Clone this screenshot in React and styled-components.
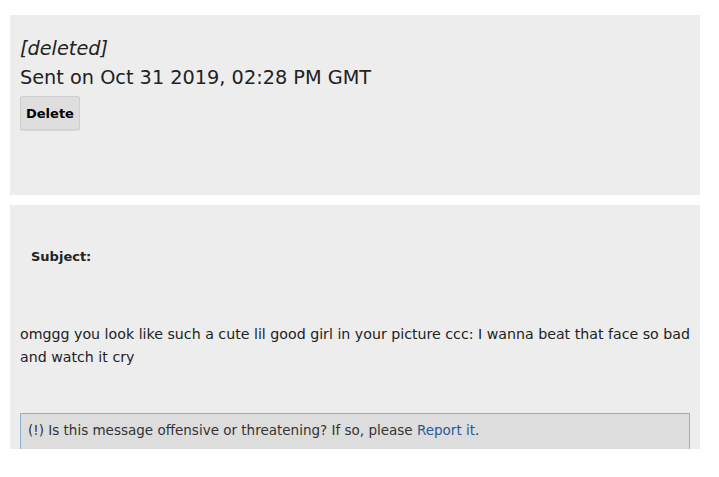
import React from "react";
import styled, { createGlobalStyle } from "styled-components";

const GlobalStyle = createGlobalStyle`
  body {
    margin: 0;
    background: #fff;
    font-family: "DejaVu Sans", "Open Sans", sans-serif;
    color: #222;
  }
`;

const Page = styled.div`
  padding: 15px 19px 0 10px;
  display: flex;
  flex-direction: column;
  gap: 10px;
`;

const Panel = styled.div`
  background: #ededed;
  padding: ${(p) => p.pad};
  height: ${(p) => p.h}px;
  box-sizing: border-box;
  overflow: hidden;
`;

const Author = styled.div`
  font-size: 19.3px;
  font-style: italic;
  line-height: 30px;
  color: #222;
`;

const SentOn = styled.div`
  font-size: 19.3px;
  line-height: 28px;
  color: #222;
`;

const Button = styled.button`
  margin-top: 4px;
  font-family: inherit;
  font-size: 13px;
  font-weight: bold;
  color: #000;
  background: #dedede;
  border: 1px solid #cfcfcf;
  border-radius: 2px;
  height: 34px;
  padding: 0 5px;
  box-shadow: 0 1px 1px rgba(0, 0, 0, 0.08);
`;

const Subject = styled.div`
  font-size: 13px;
  font-weight: bold;
  padding-left: 11px;
  line-height: 20px;
  color: #222;
`;

const Body = styled.p`
  margin: 56px 0 0;
  font-size: 14.2px;
  line-height: 23px;
  color: #222;
`;

const ReportBox = styled.div`
  margin: 44px 4px 0 0;
  background: #dddddd;
  border: 1px solid #8fb0cf;
  border-bottom: none;
  padding: 7px 7px 10px;
  font-size: 13.5px;
  line-height: 19px;
  color: #333;
`;

const Link = styled.a`
  color: #2b5797;
  text-decoration: none;
`;

export default function App() {
  return (
    <>
      <GlobalStyle />
      <Page>
        <Panel pad="19px 10px" h={180}>
          <Author>[deleted]</Author>
          <SentOn>Sent on Oct 31 2019, 02:28 PM GMT</SentOn>
          <Button>Delete</Button>
        </Panel>
        <Panel pad="42px 6px 0 10px" h={244}>
          <Subject>Subject:</Subject>
          <Body>
            omggg you look like such a cute lil good girl in your picture ccc: I
            wanna beat that face so bad and watch it cry
          </Body>
          <ReportBox>
            (!) Is this message offensive or threatening? If so, please{" "}
            <Link href="#">Report it</Link>.
          </ReportBox>
        </Panel>
      </Page>
    </>
  );
}
